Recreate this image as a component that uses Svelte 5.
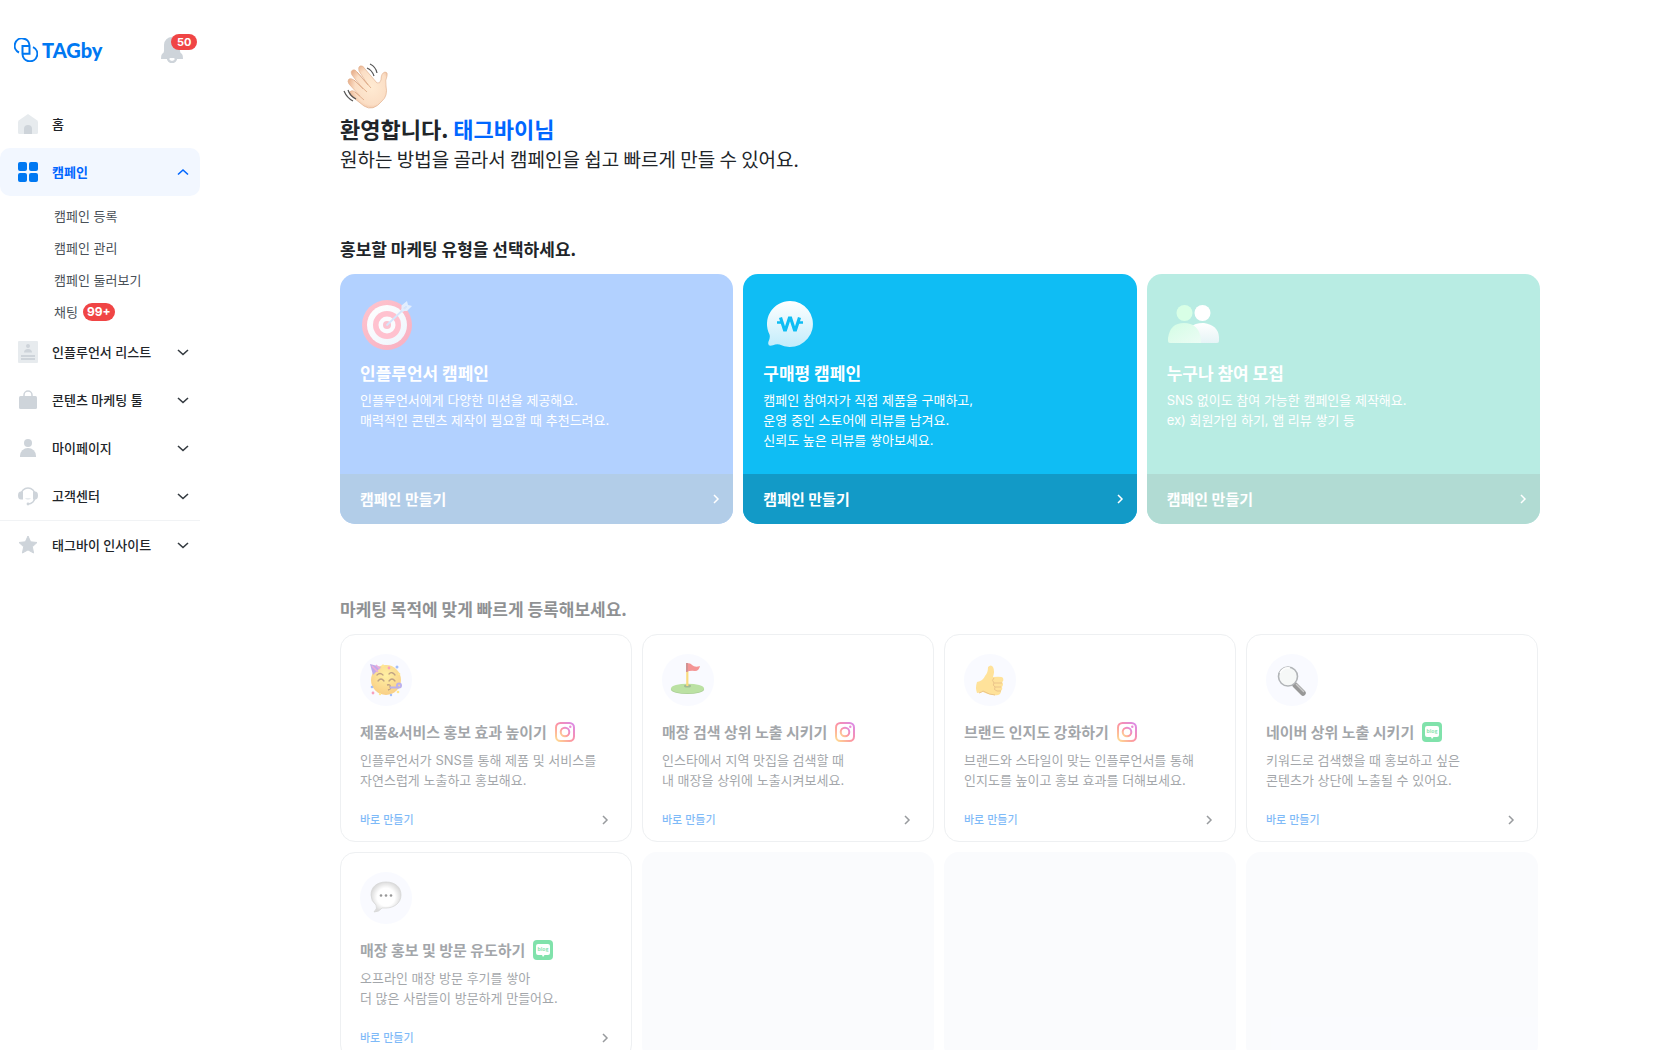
<script lang="ts">
  type Icon = "home" | "grid" | "list" | "bag" | "person" | "support" | "star";

  interface MenuItem {
    icon: Icon;
    label: string;
    active?: boolean;
    leaf?: boolean;
    divided?: boolean;
    children?: { label: string; badge?: string }[];
  }

  const menu: MenuItem[] = [
    { icon: "home", label: "홈", leaf: true },
    {
      icon: "grid",
      label: "캠페인",
      active: true,
      children: [
        { label: "캠페인 등록" },
        { label: "캠페인 관리" },
        { label: "캠페인 둘러보기" },
        { label: "채팅", badge: "99+" },
      ],
    },
    { icon: "list", label: "인플루언서 리스트" },
    { icon: "bag", label: "콘텐츠 마케팅 툴" },
    { icon: "person", label: "마이페이지" },
    { icon: "support", label: "고객센터" },
    { icon: "star", label: "태그바이 인사이트", divided: true },
  ];

  const types = [
    {
      kind: "influencer",
      title: "인플루언서 캠페인",
      lines: ["인플루언서에게 다양한 미션을 제공해요.", "매력적인 콘텐츠 제작이 필요할 때 추천드려요."],
    },
    {
      kind: "review",
      title: "구매평 캠페인",
      lines: ["캠페인 참여자가 직접 제품을 구매하고,", "운영 중인 스토어에 리뷰를 남겨요.", "신뢰도 높은 리뷰를 쌓아보세요."],
    },
    {
      kind: "anyone",
      title: "누구나 참여 모집",
      lines: ["SNS 없이도 참여 가능한 캠페인을 제작해요.", "ex) 회원가입 하기, 앱 리뷰 쌓기 등"],
    },
  ];

  const goals = [
    {
      art: "party",
      channel: "instagram",
      title: "제품&서비스 홍보 효과 높이기",
      lines: ["인플루언서가 SNS를 통해 제품 및 서비스를", "자연스럽게 노출하고 홍보해요."],
    },
    {
      art: "flag",
      channel: "instagram",
      title: "매장 검색 상위 노출 시키기",
      lines: ["인스타에서 지역 맛집을 검색할 때", "내 매장을 상위에 노출시켜보세요."],
    },
    {
      art: "thumb",
      channel: "instagram",
      title: "브랜드 인지도 강화하기",
      lines: ["브랜드와 스타일이 맞는 인플루언서를 통해", "인지도를 높이고 홍보 효과를 더해보세요."],
    },
    {
      art: "search",
      channel: "blog",
      title: "네이버 상위 노출 시키기",
      lines: ["키워드로 검색했을 때 홍보하고 싶은", "콘텐츠가 상단에 노출될 수 있어요."],
    },
    {
      art: "talk",
      channel: "blog",
      title: "매장 홍보 및 방문 유도하기",
      lines: ["오프라인 매장 방문 후기를 쌓아", "더 많은 사람들이 방문하게 만들어요."],
    },
  ];
</script>

{#snippet menuIcon(name: Icon)}
  <svg class="menu-icon" viewBox="0 0 20 22" aria-hidden="true">
    {#if name === "home"}
      <path d="M10 1 19 7.2Q20 8 20 9.2V19.5Q20 21 18.5 21H1.5Q0 21 0 19.5V9.2Q0 8 1 7.2Z" fill="#e7ebee" />
      <path d="M6 21V16a4 4 0 0 1 8 0v5z" fill="#ced4da" />
    {:else if name === "grid"}
      <g fill="#0078f2">
        <rect x="0" y="1" width="9" height="9" rx="2" />
        <rect x="11" y="1" width="9" height="9" rx="2" />
        <rect x="0" y="12" width="9" height="9" rx="2" />
        <rect x="11" y="12" width="9" height="9" rx="2" />
      </g>
    {:else if name === "list"}
      <rect width="20" height="22" rx="1" fill="#e7ebee" />
      <circle cx="10" cy="5" r="2" fill="#ced4da" />
      <path d="M6 11.5a4 3.5 0 0 1 8 0zM3 14h14v2H3zM3 17h14v2H3z" fill="#ced4da" />
    {:else if name === "bag"}
      <path d="M6 8V6a4 4 0 0 1 8 0v2" fill="none" stroke="#ced4da" stroke-width="1.5" />
      <rect x="1" y="7" width="18" height="13" rx="1.5" fill="#ced4da" />
    {:else if name === "person"}
      <circle cx="10" cy="6" r="4" fill="#ced4da" />
      <path d="M2 20v-1a8 8 0 0 1 16 0v1z" fill="#ced4da" />
    {:else if name === "support"}
      <path d="M3 10a7 7 0 0 1 14 0v2a7 7 0 0 1-7 7" fill="none" stroke="#ced4da" stroke-width="1.5" />
      <path d="M5 6.5v8H3Q0 14.5 0 10.5T3 6.5zM15 6.5v8h2q3 0 3-4t-3-4z" fill="#ced4da" />
      <circle cx="10" cy="19" r="1.4" fill="#ced4da" />
      <path d="M7 13a3.2 2.6 0 0 0 6 0z" fill="#e7ebee" />
    {:else}
      <path d="m10 2 2.6 5.8 6.4.7-4.700 4.300 1.300 6.200L10 15.900 4.400 19l1.300-6.200L1 8.500l6.400-.7z" fill="#ced4da" stroke="#ced4da" stroke-linejoin="round" />
    {/if}
  </svg>
{/snippet}

{#snippet arrow()}
  <svg class="arrow" viewBox="0 0 16 16" aria-hidden="true">
    <path d="m7 4 4 4-4 4" />
  </svg>
{/snippet}

{#snippet typeArt(kind: string)}
  <svg class="type-art" viewBox="0 0 52 52" aria-hidden="true">
    {#if kind === "influencer"}
      <defs>
        <linearGradient id="target-red" x1="0" y1="0" x2="1" y2="1">
          <stop offset="0" stop-color="#ffc4ce" />
          <stop offset="1" stop-color="#f7b0c2" />
        </linearGradient>
        <linearGradient id="target-white" x1="0" y1="0" x2="1" y2="1">
          <stop offset="0" stop-color="#fff" />
          <stop offset="1" stop-color="#eef5fd" />
        </linearGradient>
      </defs>
      <circle cx="27" cy="27" r="25" fill="url(#target-red)" />
      <circle cx="27" cy="27" r="20" fill="url(#target-white)" />
      <circle cx="27" cy="27" r="14" fill="#ffc1cf" />
      <circle cx="27" cy="27" r="8.5" fill="#fafcff" />
      <circle cx="27" cy="27" r="4" fill="#fbc3d1" />
      <path d="m27 27 19-18" stroke="#d5e6fc" stroke-width="1.8" stroke-linecap="round" />
      <path d="M41.500 11.500v-4L47 3l1 4 4 1-5 5h-4l4-4-1-1zM43 14l-2-2 1-3 3 3z" fill="#e2eefe" />
    {:else if kind === "review"}
      <defs>
        <linearGradient id="bubble" x1="0" y1="0" x2="0" y2="1">
          <stop offset="0" stop-color="#fff" />
          <stop offset="1" stop-color="#c2ecfb" />
        </linearGradient>
      </defs>
      <path d="M27 3a23 23 0 1 1-10.5 43.5Q13.5 45.5 10 47.300Q4 49 5.500 43.500Q7.500 39 6.500 36.500A23 23 0 0 1 27 3Z" fill="url(#bubble)" />
      <g fill="none" stroke="#0fbdf4">
        <path d="m17.500 19.500 4 12.500h1L26.400 20h1.200l3.900 12h1l4-12.500" stroke-width="3.2" />
        <path d="M14 24.500h5M35 24.500h5" stroke-width="2.6" />
      </g>
    {:else}
      <defs>
        <linearGradient id="people-back" x1="0" y1="0" x2="0" y2="1">
          <stop offset="0" stop-color="#fff" />
          <stop offset="1" stop-color="#e6f4f6" />
        </linearGradient>
        <linearGradient id="people-front" x1="0" y1="0" x2="1" y2="1">
          <stop offset="0" stop-color="#d3fde4" />
          <stop offset="1" stop-color="#ecfcf5" />
        </linearGradient>
      </defs>
      <circle cx="35.5" cy="15" r="8" fill="#fff" />
      <path d="M18 45V41q2-16 18-16h1q14 2 15 14v4q0 2-2 2z" fill="url(#people-back)" />
      <circle cx="17.5" cy="15" r="8" fill="#d8ffe6" />
      <path d="M3 45q-2 0-2-2v-3q2-15 16-15t17 15v5z" fill="url(#people-front)" />
    {/if}
  </svg>
{/snippet}

{#snippet goalArt(name: string)}
  <svg class="goal-art" viewBox="0 0 52 52" aria-hidden="true">
    {#if name === "party"}
      <defs>
        <radialGradient id="face" cx=".5" cy=".35" r=".7">
          <stop offset="0" stop-color="#ffe34a" />
          <stop offset="1" stop-color="#f49b0b" />
        </radialGradient>
      </defs>
      <circle cx="26" cy="26" r="15" fill="url(#face)" />
      <path d="m10 10 11 3-8 8z" fill="#8059d4" />
      <path d="m12 12 6 6M16 11l4 4" stroke="#e35bb5" stroke-width="1.5" />
      <path d="M17 21q3-3 6 0M29 20q3-3 6 1M18 27q3-4 6 0M29 27q3-4 6 0" fill="none" stroke="#80470c" stroke-width="1.3" stroke-linecap="round" />
      <path d="M27 31q4-1 3 2 2 2-2 3" fill="none" stroke="#80470c" stroke-width="1.3" />
      <path d="M30 33.5h9" stroke="#7a65dd" stroke-width="2" />
      <circle cx="39" cy="31.5" r="2" fill="none" stroke="#7a65dd" stroke-width="2" />
      <g fill="#4d7ff0">
        <circle cx="37" cy="13" r="1.5" />
        <circle cx="12" cy="33" r="1.3" />
        <circle cx="31" cy="41" r="1.2" />
      </g>
      <g fill="#f2437d">
        <circle cx="29" cy="14" r="1.4" />
        <circle cx="13" cy="39" r="1.4" />
      </g>
      <g fill="#ffd025">
        <circle cx="23" cy="12" r="1.4" />
        <circle cx="39" cy="20" r="1.3" />
        <circle cx="38" cy="38" r="1.3" />
        <circle cx="20" cy="40" r="1.2" />
      </g>
    {:else if name === "flag"}
      <ellipse cx="25.5" cy="35.5" rx="16.5" ry="4.5" fill="#569f2d" />
      <ellipse cx="25.5" cy="34.5" rx="16.5" ry="4.800" fill="#79c54a" />
      <ellipse cx="25.5" cy="32" rx="3.5" ry="1.500" fill="#4a782d" />
      <path d="M25.300 10v22" stroke="#f7b900" stroke-width="2.2" />
      <path d="M24 9q5 0 6 2 3 3 8 1-1 5-5 5-4-1-9 1z" fill="#eb2d2d" />
      <path d="M24 9h2v8.500l-2 .5z" fill="#a72a2a" />
    {:else if name === "thumb"}
      <path d="M24 13q3-3 5 0 2 4 0 10 9-1 10 1 1 3-1 4 2 2 0 5 1 2-1 4 0 3-3 4-8 1-15-3l-6 1q-2-5 0-11 6-1 8-6 3-3 3-9Z" fill="#ffc738" />
      <path d="M30 24q-3 2 0 5h8M30 29q-2 2 1 4h6M31 33q-2 3 2 4h4M15 39q3-1 4-2 7 4 12 4" fill="none" stroke="#d98b17" stroke-width="1" />
    {:else if name === "search"}
      <path d="m29 31 8 8" stroke="#333" stroke-width="5.500" stroke-linecap="round" />
      <path d="m30 30 8 8" stroke="#999" stroke-width="1.500" />
      <circle cx="22" cy="22.500" r="9.500" fill="#eff3f1" stroke="#666b72" stroke-width="1.600" />
      <path d="M14 19q3-6 10-5" fill="none" stroke="#fff" stroke-width="1.500" />
    {:else}
      <defs>
        <radialGradient id="talk-fill">
          <stop offset=".6" stop-color="#fff" />
          <stop offset="1" stop-color="#bcbcbc" />
        </radialGradient>
      </defs>
      <path d="M26 10c9 0 15 5 15 13s-7 13-15 13h-4q-3 4-8 4 4-4 2-7-5-4-5-10c0-8 6-13 15-13Z" fill="url(#talk-fill)" stroke="#aaa" stroke-width=".7" />
      <g fill="#333">
        <circle cx="21" cy="23.500" r="1.300" />
        <circle cx="26" cy="23.500" r="1.300" />
        <circle cx="31" cy="23.500" r="1.300" />
      </g>
    {/if}
  </svg>
{/snippet}

{#snippet channelIcon(name: string)}
  <svg class="channel" viewBox="0 0 20 20" aria-label={name}>
    {#if name === "instagram"}
      <defs>
        <linearGradient id="insta" x1="0" y1="1" x2="1" y2="0">
          <stop offset="0" stop-color="#ffbd24" />
          <stop offset=".5" stop-color="#fa254c" />
          <stop offset="1" stop-color="#b517d8" />
        </linearGradient>
      </defs>
      <g fill="none" stroke="url(#insta)">
        <rect x="1" y="1" width="18" height="18" rx="4.5" stroke-width="2" />
        <circle cx="10" cy="10" r="4.3" stroke-width="2" />
      </g>
      <circle cx="15.3" cy="4.7" r="1.2" fill="#d51dac" />
    {:else}
      <rect width="20" height="20" rx="4" fill="#03c75a" />
      <path d="M5 4h10q2 0 2 2v7q0 2-2 2h-3.500L10 17l-1-2H5q-2 0-2-2V6q0-2 2-2Z" fill="#fff" />
      <text x="10" y="11">blog</text>
    {/if}
  </svg>
{/snippet}

<div class="app">
  <aside class="sidebar">
    <header class="brand">
      <a class="logo" href="#home">
        <svg class="logo-mark" viewBox="0 0 24 24" aria-hidden="true">
          <path d="M7.8 15.7h7.700V7.500A7.400 7.400 0 1 0 5 14.500M16 8H8.500v8a7.400 7.400 0 1 0 10.500-6.800" fill="none" stroke="currentColor" stroke-width="2" />
        </svg>
        <span>TAGby</span>
      </a>
      <button class="bell" aria-label="알림">
        <svg viewBox="0 0 22 26" aria-hidden="true">
          <path d="M11 0a8 8 0 0 1 8 8v6q0 2 2 3 1 1 1 5H0q0-4 1-5 2-1 2-3V8a8 8 0 0 1 8-8Z" fill="#ced4da" />
          <path d="M7 21a4 4 0 0 0 8 0" fill="none" stroke="#ced4da" stroke-width="2.500" />
          <path d="M8.500 21a2.500 2.500 0 0 0 5 0z" fill="#fff" />
        </svg>
        <span class="count bell-count">50</span>
      </button>
    </header>

    <nav>
      {#each menu as item}
        <a class="menu-item" class:active={item.active} class:divided={item.divided} href="#{item.icon}">
          {@render menuIcon(item.icon)}
          <span class="menu-label">{item.label}</span>
          {#if !item.leaf}
            <svg class="caret" viewBox="0 0 12 12" aria-hidden="true">
              <path d={item.active ? "m1 8.500 5-4.500 5 4.500" : "m1 4 5 4.500 5-4.500"} />
            </svg>
          {/if}
        </a>
        {#if item.children}
          <ul class="submenu">
            {#each item.children as child}
              <li>
                <a href="#campaign">{child.label}</a>
                {#if child.badge}<span class="count">{child.badge}</span>{/if}
              </li>
            {/each}
          </ul>
        {/if}
      {/each}
    </nav>
  </aside>

  <main>
    <div class="container">
      <section class="welcome">
        <svg class="wave" viewBox="0 -2 52 52" aria-hidden="true">
          <defs>
            <radialGradient id="skin" cx=".6" cy=".5" r=".6">
              <stop offset="0" stop-color="#ffebd3" />
              <stop offset=".7" stop-color="#fbdec5" />
              <stop offset="1" stop-color="#e9b28f" />
            </radialGradient>
          </defs>
          <path
            d="M24 44 10 33q-2-3 1-4 2-1 4 1l5 4L9 22q-2-3 0-5 2-1 5 1l9 9-11-14q-2-4 1-5 2-1 4 2l11 13L19 9q-1-4 1-5 3-1 5 3l12 14q3 1 4-3 0-7 4-8 3 0 2 4-2 4-1 10 2 10-4 15-9 11-18 5Z"
            fill="url(#skin)"
            stroke="#e3b18f"
            stroke-width=".7"
          />
          <path d="m15 30 9 8M14 18l13 12M17 10l14 16" fill="none" stroke="#dcaa88" stroke-width=".9" />
          <path d="M27 6q5 2 7 8M30 2q6 3 7 9M8 28q2 6 8 9M4 29q3 7 9 10" fill="none" stroke="#555" stroke-width="1.2" />
        </svg>
        <h1>환영합니다. <em>태그바이님</em></h1>
        <p>원하는 방법을 골라서 캠페인을 쉽고 빠르게 만들 수 있어요.</p>
      </section>

      <section>
        <h2>홍보할 마케팅 유형을 선택하세요.</h2>
        <div class="types">
          {#each types as type}
            <a class="type {type.kind}" href="#{type.kind}">
              <div class="type-body">
                {@render typeArt(type.kind)}
                <h3>{type.title}</h3>
                <p>{#each type.lines as line}<span>{line}</span>{/each}</p>
              </div>
              <div class="type-foot">
                <span>캠페인 만들기</span>
                {@render arrow()}
              </div>
            </a>
          {/each}
        </div>
      </section>

      <section class="quick">
        <h2>마케팅 목적에 맞게 빠르게 등록해보세요.</h2>
        <div class="goals">
          {#each goals as goal}
            <a class="goal" href="#{goal.art}">
              {@render goalArt(goal.art)}
              <h3>{goal.title} {@render channelIcon(goal.channel)}</h3>
              <p>{#each goal.lines as line}<span>{line}</span>{/each}</p>
              <div class="goal-foot">
                <span>바로 만들기</span>
                {@render arrow()}
              </div>
            </a>
          {/each}
          {#each [0, 1, 2] as _}
            <div class="goal-empty"></div>
          {/each}
        </div>
      </section>
    </div>
  </main>
</div>

<style>
  :global(body) {
    background: #fff;
    color: #212529;
    font-family: Inter, "Noto Sans CJK KR", sans-serif;
    font-size: 13px;
  }
  .app {
    display: flex;
    height: 100vh;
  }
  a {
    color: inherit;
    text-decoration: none;
  }
  h1,
  h2,
  h3,
  p,
  ul {
    margin: 0;
    padding: 0;
  }
  h1,
  h2,
  h3,
  .welcome p {
    font-family: "Noto Sans CJK KR", sans-serif;
  }

  /* Sidebar */
  .sidebar {
    flex: 0 0 200px;
  }
  .brand {
    display: flex;
    align-items: center;
    justify-content: space-between;
    box-sizing: border-box;
    height: 100px;
    padding: 0 17px 0 14px;
  }
  .logo {
    display: flex;
    align-items: center;
    gap: 4px;
    color: #0078f2;
    font-family: Lato, Inter, sans-serif;
    font-size: 20px;
    font-weight: 900;
    line-height: 24px;
  }
  .logo-mark {
    width: 24px;
    height: 24px;
  }
  .bell {
    position: relative;
    padding: 0;
    border: 0;
    background: none;
  }
  .bell svg {
    display: block;
    width: 22px;
    height: 26px;
  }
  .count {
    padding: 0 4px;
    border-radius: 9px;
    background: #f04545;
    color: #fff;
    font-family: Inter, sans-serif;
    font-size: 12px;
    font-weight: 700;
    line-height: 18px;
  }
  .bell-count {
    position: absolute;
    top: -3px;
    left: 10px;
    padding: 0 6px;
    font-size: 11px;
    line-height: 16px;
  }
  .menu-item {
    display: flex;
    align-items: center;
    gap: 14px;
    height: 48px;
    padding: 0 11px 0 18px;
    font-weight: 500;
  }
  .menu-item.active {
    border-radius: 10px;
    background: #f2f7ff;
    color: #0066ff;
    font-weight: 700;
  }
  .menu-item.divided {
    border-top: 1px solid #f1f3f5;
  }
  .menu-icon {
    width: 20px;
    height: 22px;
  }
  .menu-label {
    flex: 1;
    padding-bottom: 2px;
  }
  .caret {
    width: 12px;
    height: 12px;
    fill: none;
    stroke: #343a40;
    stroke-width: 1.6;
  }
  .active .caret {
    stroke: #0066ff;
  }
  .submenu {
    padding: 4px 0 0 54px;
    list-style: none;
    color: #495057;
  }
  .submenu li {
    display: flex;
    align-items: center;
    gap: 5px;
    height: 32px;
  }
  .submenu a {
    padding-bottom: 2px;
  }

  /* Main column */
  main {
    flex: 1;
    overflow-y: auto;
    scrollbar-width: none;
  }
  .container {
    max-width: 1200px;
    margin: 0 auto;
    padding: 60px 20px;
  }
  .wave {
    display: block;
    width: 52px;
    height: 52px;
  }
  h1 {
    font-size: 22px;
    font-weight: 700;
    line-height: 32px;
  }
  h1 em {
    color: #0066ff;
    font-style: normal;
  }
  .welcome p {
    font-size: 19px;
    line-height: 30px;
  }
  .welcome {
    margin-bottom: 60px;
  }
  h2 {
    margin-bottom: 10px;
    font-size: 17px;
    font-weight: 700;
    line-height: 30px;
  }
  p span {
    display: block;
  }

  .types {
    display: grid;
    grid-template-columns: repeat(3, 1fr);
    gap: 10px;
    margin-bottom: 70px;
  }
  .type {
    display: flex;
    flex-direction: column;
    min-height: 250px;
    overflow: hidden;
    border-radius: 15px;
    color: #fff;
  }
  .type-body {
    flex: 1;
    padding: 24px 20px 20px;
  }
  .type-art {
    display: block;
    width: 52px;
    height: 52px;
  }
  .type h3 {
    margin: 10px 0 4px;
    font-size: 17px;
    font-weight: 700;
    line-height: 26px;
  }
  .type p {
    line-height: 20px;
  }
  .type-foot {
    display: flex;
    align-items: center;
    justify-content: space-between;
    height: 50px;
    padding: 0 10px 0 20px;
    font-size: 15px;
    font-weight: 700;
  }
  .type-foot span {
    padding-bottom: 2px;
  }
  .influencer {
    background: #b2d1ff;
  }
  .influencer .type-foot {
    background: #b2cde8;
  }
  .review {
    background: #0fbdf4;
  }
  .review .type-foot {
    background: #129ac7;
  }
  .anyone {
    background: #b8ece3;
  }
  .anyone .type-foot {
    background: #b1dbd3;
  }
  .arrow {
    width: 16px;
    height: 16px;
    fill: none;
    stroke: currentColor;
    stroke-width: 1.5;
  }

  .quick {
    opacity: 0.5;
  }
  .goals {
    display: grid;
    grid-template-columns: repeat(auto-fill, 292px);
    gap: 10px;
  }
  .goal,
  .goal-empty {
    box-sizing: border-box;
    min-height: 208px;
    border-radius: 15px;
  }
  .goal {
    padding: 19px 19px 12px;
    border: 1px solid #dee2e6;
  }
  .goal-empty {
    background: #f6f8fd;
  }
  .goal-art {
    display: block;
    width: 52px;
    height: 52px;
    border-radius: 50%;
    background: #f4f7ff;
  }
  .goal h3 {
    display: flex;
    align-items: center;
    gap: 8px;
    margin: 14px 0 6px;
    color: #495057;
    font-size: 15px;
    font-weight: 700;
    line-height: 24px;
  }
  .goal p {
    color: #495057;
    line-height: 20px;
  }
  .channel {
    width: 20px;
    height: 20px;
  }
  .channel text {
    fill: #03c75a;
    font-size: 5px;
    font-weight: 700;
    text-anchor: middle;
  }
  .goal-foot {
    display: flex;
    align-items: center;
    justify-content: space-between;
    margin-top: 21px;
    color: #343a40;
    font-size: 11px;
    font-weight: 500;
    line-height: 18px;
  }
  .goal-foot span {
    color: #0078f2;
  }
</style>
